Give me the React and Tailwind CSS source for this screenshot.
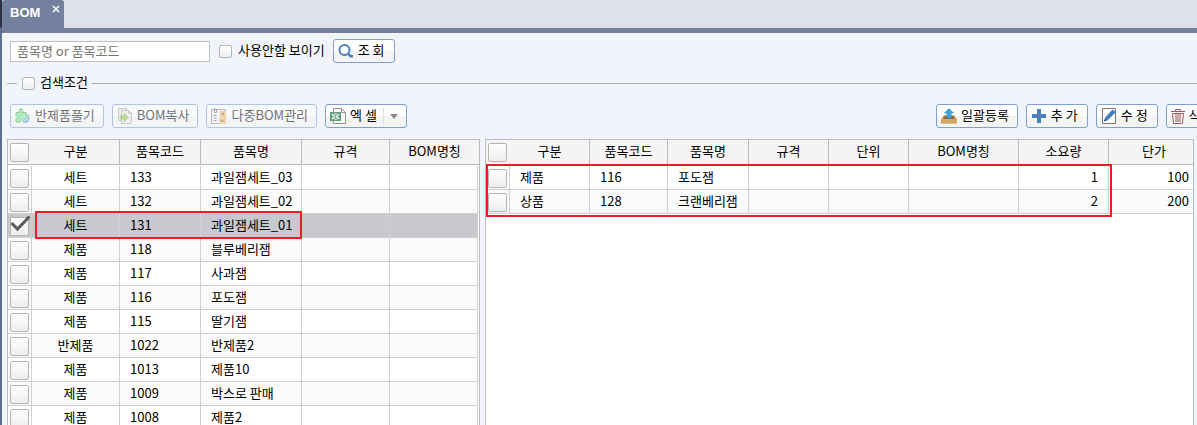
import { useState } from "react"

const leftRows = [
  ["세트", "133", "과일잼세트_03"],
  ["세트", "132", "과일잼세트_02"],
  ["세트", "131", "과일잼세트_01"],
  ["제품", "118", "블루베리잼"],
  ["제품", "117", "사과잼"],
  ["제품", "116", "포도잼"],
  ["제품", "115", "딸기잼"],
  ["반제품", "1022", "반제품2"],
  ["제품", "1013", "제품10"],
  ["제품", "1009", "박스로 판매"],
  ["제품", "1008", "제품2"],
];

const rightRows = [
  ["제품", "116", "포도잼", "", "", "", "1", "100"],
  ["상품", "128", "크랜베리잼", "", "", "", "2", "200"],
];

const PuzzleIcon = () => (
  <svg width="16" height="16" viewBox="0 0 16 16">
    <path d="M1 4.500h3.500C3.500 2 4.500.8 6 .8S8.500 2 7.500 4.500H11v2.700c2-.9 3.200 0 3.200 1.300S13 10.800 11 9.800V14H8c.8-2.400-3.800-2.400-3 0H1v-3.200c2.200.8 2.200-3.400 0-2.600z" fill="#7fe090" stroke="#3fae5a" />
    <path d="M8 12.500l4-3.500 3 1-1.500 4-4 1.500z" fill="#6aa5e2" />
    <path d="M9 13l4-2.500" stroke="#c9def3" />
  </svg>
);

const CopyIcon = () => (
  <svg width="16" height="16" viewBox="0 0 16 16">
    <path d="M1.500.5h8v12h-8z" fill="#f0f0f0" stroke="#aaa" />
    <path d="M4.500 2.500h7l3 3v10h-10z" fill="#ededed" stroke="#a5a5a5" />
    <path d="M11.500 2.500v3h3" fill="none" stroke="#a5a5a5" />
    <path d="M3 8h4V5.500l4.500 4-4.500 4V11H3z" fill="#97c93f" stroke="#6f9a2c" strokeWidth=".6" />
  </svg>
);

const MultiIcon = () => (
  <svg width="16" height="16" viewBox="0 0 16 16">
    <path d="M.5 1.500h14v14H.5z" fill="#f6f6f6" stroke="#888" />
    <path d="M3.500 0v4.500h2V1M2.500 7.500h3M2.500 10h3M2.500 12.500h3" fill="none" stroke="#666" />
    <path d="M9 3h6v6H9zM8 9.500h7V16H8z" fill="#eeb468" />
    <path d="M11 5h2v1.500h-2zM10.500 12h2v1.500h-2z" fill="#705230" />
  </svg>
);

const ExcelIcon = () => (
  <svg width="16" height="16" viewBox="0 0 16 16">
    <path d="M3.500.5h8l4 4v11h-12z" fill="#fff" stroke="#929292" />
    <path d="M11.500.5v4h4" fill="none" stroke="#929292" />
    <path d="M0 4h11v9H0z" fill="#5f9f80" />
    <path d="M2 6l2.500 2.500L2 11M9 6L6.500 8.500 9 11M4 6h3M4 11h3" fill="none" stroke="#fff" strokeWidth="1.200" />
  </svg>
);

const SearchIcon = () => (
  <svg width="16" height="16" viewBox="0 0 16 16">
    <circle cx="6.500" cy="7" r="5" fill="#fff" stroke="#4b80b8" strokeWidth="2" />
    <path d="M10.500 11l2 2.200h2.500" fill="none" stroke="#4b80b8" strokeWidth="2.600" />
  </svg>
);

const UploadIcon = () => (
  <svg width="16" height="16" viewBox="0 0 16 16">
    <path d="M3 7h10l3 4v4.500H0V11z" fill="#dbac70" />
    <path d="M3.500 8h9l1.500 3H2z" fill="#8b6844" />
    <path d="M0 11h4.500l1 2h5l1-2H16v4.500H0z" fill="#d5a364" />
    <path d="M8 .5l4.500 4.500H10v5H6V5H3.500z" fill="#3ca3dc" stroke="#2586bd" strokeWidth=".6" />
  </svg>
);

const PlusIcon = () => (
  <svg width="16" height="16" viewBox="0 0 16 16">
    <path d="M6 1h4v5h5v4h-5v5H6v-5H1V6h5z" fill="#4a80bb" />
  </svg>
);

const EditIcon = () => (
  <svg width="16" height="16" viewBox="0 0 16 16">
    <path d="M1.500.5h13v15h-13z" fill="#fff" stroke="#777" />
    <path d="M3 13.500L4.500 9 11.500 1.500 15 4 7.500 11.500z" fill="#4480bf" />
    <path d="M3 13.500l1-3 2 2z" fill="#264c78" />
  </svg>
);

const TrashIcon = () => (
  <svg width="14" height="16" viewBox="0 0 14 16">
    <path d="M0 3.500h14M4.500 3V1.500h5V3M1.500 5.500l1 10h9l1-10zM5 6v8M7 6v8M9 6v8" fill="none" stroke="#a05a5f" />
  </svg>
);

const ToolButton = ({ icon, label, disabled, children }) => (
  <button
    disabled={disabled}
    className="flex h-6 min-w-[62px] shrink-0 items-center gap-1 rounded-[3px] border border-[#7e9fcf] bg-linear-to-b from-white from-50% to-[#f4f4f4] to-50% px-1 pr-2 whitespace-nowrap disabled:opacity-55"
  >
    {icon}
    <span className="pb-0.5">{label}</span>
    {children}
  </button>
);

const checkboxClass = "block shrink-0 appearance-none rounded-[2px] border border-[#b4b4b4] bg-linear-to-b from-white to-[#ededed]";

const GridCheckbox = ({ label, checked, onChange }) => (
  <span className="relative ml-0.5 block size-[19px]">
    <input type="checkbox" aria-label={label} checked={checked} onChange={onChange} className={`${checkboxClass} size-[19px]`} />
    {checked && (
      <svg className="pointer-events-none absolute -top-px left-0" width="21" height="18" viewBox="0 0 21 18">
        <path d="M1.500 7l6 6L19.500.5" fill="none" stroke="#5b5b5b" strokeWidth="3" />
      </svg>
    )}
  </span>
);

const HeaderCell = ({ children }) => (
  <th className="border-r border-b border-[#bbb] p-0 pb-0.5 text-center font-normal">{children}</th>
);

const Cell = ({ align = "text-left", children }) => (
  <td className={`overflow-hidden border-r border-b border-[#d0d0d0] px-2.5 pt-0 pb-0.5 whitespace-nowrap ${align}`}>{children}</td>
);

const LeftColumns = () => (
  <colgroup>
    <col className="w-6" />
    <col className="w-[88px]" />
    <col className="w-[81px]" />
    <col className="w-[101px]" />
    <col className="w-[88px]" />
    <col />
  </colgroup>
);

const LeftGrid = () => {
  const [selected, setSelected] = useState(2);

  return (
    <div className="relative w-[473px] shrink-0 overflow-hidden border border-b-0 border-[#bbb] bg-white">
      <table className="w-full table-fixed border-separate border-spacing-0">
        <LeftColumns />
        <thead>
          <tr className="h-[25px] bg-[#f4f4f4]">
            <th className="border-b border-[#bbb] p-0"><GridCheckbox label="전체 선택" checked={false} onChange={() => {}} /></th>
            <HeaderCell>구분</HeaderCell>
            <HeaderCell>품목코드</HeaderCell>
            <HeaderCell>품목명</HeaderCell>
            <HeaderCell>규격</HeaderCell>
            <th className="border-b border-[#bbb] p-0 pb-0.5 text-center font-normal">BOM명칭</th>
          </tr>
        </thead>
      </table>
      <table className="mt-px w-[470px] table-fixed border-separate border-spacing-0">
        <LeftColumns />
        <tbody>
          {leftRows.map((row, i) => (
            <tr key={row[1]} className={`h-6 ${i === selected ? "bg-[#c8c9ce]" : i % 2 ? "bg-[#fafafa]" : "bg-white"}`}>
              <td className="border-r border-b border-[#d0d0d0] p-0 pt-0.5">
                <GridCheckbox label={row[2]} checked={i === selected} onChange={() => setSelected(i)} />
              </td>
              <Cell align="text-center">{row[0]}</Cell>
              <Cell>{row[1]}</Cell>
              <Cell>{row[2]}</Cell>
              <Cell />
              <Cell />
            </tr>
          ))}
        </tbody>
      </table>
      <div className="pointer-events-none absolute top-[71px] left-[27px] h-7 w-[267px] border-2 border-[#ed1c24]" />
    </div>
  );
};

const RightGrid = () => (
  <div className="relative min-w-0 flex-1 border border-b-0 border-[#bbb] bg-white">
    <table className="w-full table-fixed border-separate border-spacing-0">
      <colgroup>
        <col className="w-6" />
        <col className="w-20" />
        <col className="w-[78px]" />
        <col className="w-[81px]" />
        <col className="w-20" />
        <col className="w-20" />
        <col className="w-[110px]" />
        <col className="w-[90px]" />
        <col />
      </colgroup>
      <thead>
        <tr className="h-[25px] bg-[#f4f4f4]">
          <th className="border-b border-[#bbb] p-0"><GridCheckbox label="전체 선택" checked={false} onChange={() => {}} /></th>
          <HeaderCell>구분</HeaderCell>
          <HeaderCell>품목코드</HeaderCell>
          <HeaderCell>품목명</HeaderCell>
          <HeaderCell>규격</HeaderCell>
          <HeaderCell>단위</HeaderCell>
          <HeaderCell>BOM명칭</HeaderCell>
          <HeaderCell>소요량</HeaderCell>
          <th className="border-b border-[#bbb] p-0 pb-0.5 pl-1.5 text-center font-normal">단가</th>
        </tr>
      </thead>
      <tbody>
        <tr className="h-px" />
        {rightRows.map((row, i) => (
          <tr key={row[1]} className={`h-6 ${i % 2 ? "bg-[#fafafa]" : "bg-white"}`}>
            <td className="border-r border-b border-[#d0d0d0] p-0 pt-0.5">
              <GridCheckbox label={row[2]} checked={false} onChange={() => {}} />
            </td>
            {row.slice(0, 7).map((text, j) => (
              <Cell key={j} align={j === 6 ? "text-right" : "text-left"}>{text}</Cell>
            ))}
            <td className="border-b border-[#d0d0d0] px-1 pt-0 pb-0.5 text-right">{row[7]}</td>
          </tr>
        ))}
      </tbody>
    </table>
    <div className="pointer-events-none absolute top-6 left-0 h-[53px] w-[626px] border-2 border-[#ed1c24]" />
  </div>
);

const App = () => (
  <div className="flex h-screen overflow-hidden bg-[#f1f4fa] font-['Noto_Sans_CJK_KR',sans-serif] text-[13px] leading-[18px] text-black">
    <div className="w-0.5 shrink-0 bg-linear-to-b from-[#2b3048] from-[27px] to-[#5d6e8e] to-[28px]" />
    <div className="flex min-w-0 flex-1 flex-col">
      <nav className="flex h-[33px] shrink-0 border-b-5 border-[#7480a0] bg-[#dfe1ea]">
        <div className="flex w-[62px] items-start justify-between rounded-t-[3px] bg-[#7480a0] pr-1 pl-2 text-white">
          <a href="#bom" className="mt-1 font-['Liberation_Sans',sans-serif] font-bold">BOM</a>
          <button aria-label="닫기" className="mt-[5px]">
            <svg width="8" height="8" viewBox="0 0 8 8"><path d="M1 1l6 6M7 1L1 7" stroke="#fff" strokeWidth="1.500" /></svg>
          </button>
        </div>
      </nav>

      <div className="flex items-center pt-1.5 pl-2">
        <input
          type="text"
          aria-label="품목명 or 품목코드"
          placeholder="품목명 or 품목코드"
          className="h-[21px] w-[200px] border border-[#c2c2c2] bg-white px-1.5 pb-0.5 placeholder:text-[#757575]"
        />
        <label className="ml-[9px] flex items-center gap-1.5">
          <input type="checkbox" className={`${checkboxClass} size-[13px]`} />
          <span className="pb-0.5">사용안함 보이기</span>
        </label>
        <div className="ml-2 flex"><ToolButton icon={<SearchIcon />} label="조 회" /></div>
      </div>

      <div className="mt-2.5 flex items-center pl-[5px]">
        <span className="h-px w-2.5 bg-[#a9abb0]" />
        <label className="mr-1 ml-[5px] flex items-center gap-[5px]">
          <input type="checkbox" className={`${checkboxClass} size-[13px]`} />
          <span className="pb-0.5">검색조건</span>
        </label>
        <span className="h-px flex-1 bg-[#a9abb0]" />
      </div>

      <div className="mt-[11px] flex shrink-0 gap-2 overflow-hidden pl-2">
        <ToolButton icon={<PuzzleIcon />} label="반제품풀기" disabled />
        <ToolButton icon={<CopyIcon />} label="BOM복사" disabled />
        <ToolButton icon={<MultiIcon />} label="다중BOM관리" disabled />
        <ToolButton icon={<ExcelIcon />} label="엑 셀">
          <span className="ml-0.5 flex h-4 items-center border-l border-[#ddd] pl-1.5">
            <svg width="8" height="5" viewBox="0 0 8 5"><path d="M0 0h8L4 5z" fill="#888" /></svg>
          </span>
        </ToolButton>
        <div className="ml-auto flex w-[261px] gap-2 overflow-hidden">
          <ToolButton icon={<UploadIcon />} label="일괄등록" />
          <ToolButton icon={<PlusIcon />} label="추 가" />
          <ToolButton icon={<EditIcon />} label="수 정" />
          <ToolButton icon={<TrashIcon />} label="삭 제" />
        </div>
      </div>

      <main className="mt-[11px] flex min-h-0 flex-1 gap-[5px] pr-[3px] pl-[5px]">
        <LeftGrid />
        <RightGrid />
      </main>
    </div>
  </div>
);

export default App
